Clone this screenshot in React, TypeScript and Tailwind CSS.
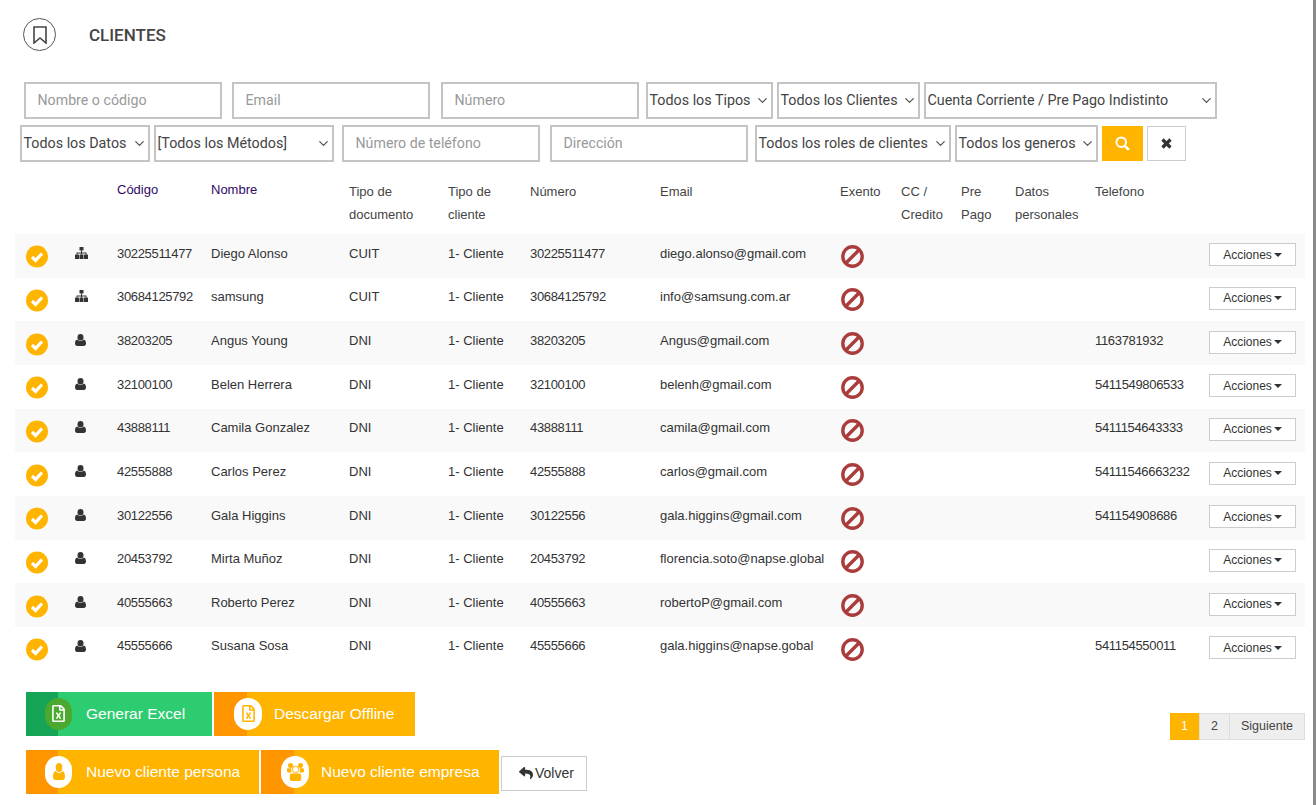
import type { ReactNode } from "react"
import { ChevronDown } from "lucide-react"
import { FaRegFileExcel, FaReply } from "react-icons/fa"

const clientes = [
  { tipo: "empresa", codigo: "30225511477", nombre: "Diego Alonso", doc: "CUIT", email: "diego.alonso@gmail.com", tel: "" },
  { tipo: "empresa", codigo: "30684125792", nombre: "samsung", doc: "CUIT", email: "info@samsung.com.ar", tel: "" },
  { tipo: "persona", codigo: "38203205", nombre: "Angus Young", doc: "DNI", email: "Angus@gmail.com", tel: "1163781932" },
  { tipo: "persona", codigo: "32100100", nombre: "Belen Herrera", doc: "DNI", email: "belenh@gmail.com", tel: "5411549806533" },
  { tipo: "persona", codigo: "43888111", nombre: "Camila Gonzalez", doc: "DNI", email: "camila@gmail.com", tel: "5411154643333" },
  { tipo: "persona", codigo: "42555888", nombre: "Carlos Perez", doc: "DNI", email: "carlos@gmail.com", tel: "54111546663232" },
  { tipo: "persona", codigo: "30122556", nombre: "Gala Higgins", doc: "DNI", email: "gala.higgins@gmail.com", tel: "541154908686" },
  { tipo: "persona", codigo: "20453792", nombre: "Mirta Muñoz", doc: "DNI", email: "florencia.soto@napse.global", tel: "" },
  { tipo: "persona", codigo: "40555663", nombre: "Roberto Perez", doc: "DNI", email: "robertoP@gmail.com", tel: "" },
  { tipo: "persona", codigo: "45555666", nombre: "Susana Sosa", doc: "DNI", email: "gala.higgins@napse.gobal", tel: "541154550011" },
]

function CheckIcon() {
  return (
    <svg width="22" height="23" viewBox="0 0 22 22" className="mt-[2px]">
      <circle cx="11" cy="11" r="11" fill="#ffb400" />
      <path d="M6 11.5l3.6 3.4L16 8" fill="none" stroke="#fff" strokeWidth="3.2" />
    </svg>
  )
}

function BanIcon() {
  return (
    <svg width="23" height="23" viewBox="0 0 23 23" fill="none" stroke="#ab3c3c" strokeWidth="3.4" className="mt-[1px]">
      <circle cx="11.5" cy="11.5" r="9.7" />
      <path d="M5 18L18 5" />
    </svg>
  )
}

function SitemapIcon() {
  return (
    <svg width="13" height="12" viewBox="0 0 13 12" fill="#333" className="mb-[6px] block">
      <rect x="4.5" y="0" width="4" height="3.6" rx="0.5" />
      <path d="M6 3.5h1v2h4.5v2h-1v-1H7v1H6v-1H2.5v1h-1v-2H6z" />
      <rect x="0" y="7.6" width="4" height="4.4" rx="0.5" />
      <rect x="4.5" y="7.6" width="4" height="4.4" rx="0.5" />
      <rect x="9" y="7.6" width="4" height="4.4" rx="0.5" />
    </svg>
  )
}

function UserIcon({ width, height, color }: { width: number; height: number; color: string }) {
  return (
    <svg width={width} height={height} viewBox="0 0 11 12" fill={color} preserveAspectRatio="none" className="block">
      <ellipse cx="5.5" cy="3.2" rx="3" ry="3.2" />
      <path d="M2.2 5.6c.8.9 2 1.4 3.3 1.4s2.5-.5 3.3-1.4C10.2 6 11 7.4 11 9.6c0 1.500-.9 2.400-2.200 2.400H2.200C.9 12 0 11.100 0 9.600 0 7.400.8 6 2.200 5.600z" />
    </svg>
  )
}

function UsersIcon() {
  return (
    <svg width="17" height="19" viewBox="0 0 17 19" fill="#ffb400" className="block">
      <circle cx="3.5" cy="3.500" r="2.500" />
      <circle cx="13.500" cy="3.500" r="2.500" />
      <path d="M0 7.500c0-.8.6-1.200 1.400-1.200h3C3.900 7.500 4 9 4.600 10.500H1.200C.5 10.500 0 10 0 9.300zM17 7.500c0-.8-.6-1.200-1.400-1.200h-3c.5 1.200.4 2.700-.2 4.200h3.400c.7 0 1.200-.5 1.200-1.200z" />
      <circle cx="8.500" cy="7.500" r="3.200" fill="none" stroke="#ffb400" strokeWidth="1" />
      <path d="M4.800 11.500h7.400c1.300 0 2 .9 2 2.200V17c0 1.200-.8 2-2 2H4.800c-1.200 0-2-.8-2-2v-3.300c0-1.300.7-2.200 2-2.200z" />
    </svg>
  )
}

function TextFilter({ placeholder, className }: { placeholder: string; className: string }) {
  return (
    <input
      placeholder={placeholder}
      className={`h-[37px] border-2 border-[#c4c4c4] bg-white pb-[2px] pl-[11.5px] text-[14.2px] text-[#444] outline-none placeholder:text-[#999] ${className}`}
    />
  )
}

function SelectFilter({ label, className }: { label: string; className: string }) {
  return (
    <div className={`flex h-[37px] items-center justify-between border-2 border-[#c4c4c4] bg-white pl-[1.5px] pr-[1px] text-[14.3px] text-[#444] ${className}`}>
      <span className="whitespace-nowrap">{label}</span>
      <ChevronDown size={15} strokeWidth={2} className="shrink-0 text-[#555]" />
    </div>
  )
}

function ActionButton({
  label,
  icon,
  green,
  second,
  className,
}: {
  label: string
  icon: ReactNode
  green?: boolean
  second?: boolean
  className: string
}) {
  return (
    <button className={`relative flex h-[44px] items-center font-['Liberation_Sans',Arial,sans-serif] text-[15.5px] text-white ${green ? "bg-[#2ecc71]" : "bg-[#ffb400]"} ${className}`}>
      <span className={`h-full shrink-0 ${second ? "w-[33px]" : "w-[32px]"} ${green ? "bg-[#16a556]" : "bg-[#ff9600]"}`} />
      <span className={`absolute top-[6px] flex h-[32px] items-center justify-center rounded-full ${second ? "left-[20px] w-[28px]" : "left-[19px] w-[27px]"} ${green ? "bg-[#4aa92e] text-white" : "bg-white text-[#ffb400]"}`}>
        {icon}
      </span>
      <span className={`whitespace-nowrap ${second ? "ml-[27px]" : "ml-[28px]"}`}>{label}</span>
    </button>
  )
}

function Th({ children, link }: { children?: ReactNode; link?: boolean }) {
  if (link) {
    return <th className="px-[8px] pt-[9px] align-top font-normal leading-[22px] text-[#2f0a66]">{children}</th>
  }
  return <th className="px-[8px] pt-[10px] align-top font-normal leading-[23px] text-[#444]">{children}</th>
}

export default function App() {
  return (
    <div className="relative h-[805px] w-[1316px] overflow-hidden border-r-[3px] border-[#8a8a8a] bg-white font-['Roboto',sans-serif] text-[#333]">
      <div className="flex items-center pl-[23px] pt-[18px]">
        <div className="flex h-[33px] w-[33px] items-center justify-center rounded-full border border-[#555]">
          <svg width="14" height="18" viewBox="0 0 14 18" fill="none" stroke="#444" strokeWidth="1.6">
            <path d="M1 1h12v16l-6-5-6 5z" />
          </svg>
        </div>
        <h1 className="ml-[33px] pt-[2px] text-[17px] font-medium text-[#444]">CLIENTES</h1>
      </div>

      <div className="mt-[31px] flex pl-[24px]">
        <TextFilter placeholder="Nombre o código" className="w-[198px]" />
        <TextFilter placeholder="Email" className="ml-[10px] w-[198px]" />
        <TextFilter placeholder="Número" className="ml-[11px] w-[198px]" />
        <SelectFilter label="Todos los Tipos" className="ml-[7px] w-[127px]" />
        <SelectFilter label="Todos los Clientes" className="ml-[4px] w-[143px]" />
        <SelectFilter label="Cuenta Corriente / Pre Pago Indistinto" className="ml-[4px] w-[293px]" />
      </div>

      <div className="mt-[6px] flex items-center pl-[20px]">
        <SelectFilter label="Todos los Datos" className="w-[130px]" />
        <SelectFilter label="[Todos los Métodos]" className="ml-[4px] w-[180px]" />
        <TextFilter placeholder="Número de teléfono" className="ml-[8px] w-[198px]" />
        <TextFilter placeholder="Dirección" className="ml-[10px] w-[198px]" />
        <SelectFilter label="Todos los roles de clientes" className="ml-[7px] w-[196px]" />
        <SelectFilter label="Todos los generos" className="ml-[4px] w-[143px]" />
        <button className="ml-[4px] flex h-[35px] w-[41px] items-center justify-center bg-[#ffb400]">
          <svg width="15" height="15" viewBox="0 0 15 15" fill="none" stroke="#fff">
            <circle cx="6.200" cy="6.200" r="4.800" strokeWidth="2" />
            <path d="M9.800 9.800l4 4" strokeWidth="2.600" />
          </svg>
        </button>
        <button className="ml-[4px] flex h-[35px] w-[39px] items-center justify-center border border-[#ccc] bg-white">
          <svg width="11" height="11" viewBox="0 0 11 11" fill="none" stroke="#333" strokeWidth="3.200">
            <path d="M1.500 1.500l8 8M9.500 1.500l-8 8" />
          </svg>
        </button>
      </div>

      <table className="ml-[15px] mt-[8px] w-[1290px] table-fixed border-collapse text-left font-['Liberation_Sans',Arial,sans-serif] text-[13px]">
        <colgroup>
          <col className="w-[52px]" />
          <col className="w-[42px]" />
          <col className="w-[94px]" />
          <col className="w-[138px]" />
          <col className="w-[99px]" />
          <col className="w-[82px]" />
          <col className="w-[130px]" />
          <col className="w-[180px]" />
          <col className="w-[61px]" />
          <col className="w-[60px]" />
          <col className="w-[54px]" />
          <col className="w-[80px]" />
          <col className="w-[114px]" />
          <col className="w-[104px]" />
        </colgroup>
        <thead>
          <tr className="h-[64px]">
            <Th />
            <Th />
            <Th link>Código</Th>
            <Th link>Nombre</Th>
            <Th>Tipo de<br />documento</Th>
            <Th>Tipo de<br />cliente</Th>
            <Th>Número</Th>
            <Th>Email</Th>
            <Th>Exento</Th>
            <Th>CC /<br />Credito</Th>
            <Th>Pre<br />Pago</Th>
            <Th>Datos<br />personales</Th>
            <Th>Telefono</Th>
            <Th />
          </tr>
        </thead>
        <tbody>
          {clientes.map((c, i) => (
            <tr key={c.codigo} className={`h-[43.67px] ${i % 2 === 0 ? "bg-[#f9f9f9]" : "bg-white"}`}>
              <td className="pl-[11px] align-middle">
                <CheckIcon />
              </td>
              <td className="pl-[8px] align-middle">
                {c.tipo === "empresa" ? <SitemapIcon /> : <div className="mb-[6px]"><UserIcon width={11} height={12} color="#333" /></div>}
              </td>
              <td className="px-[8px] pb-[5px] align-middle tracking-[-0.33px]">{c.codigo}</td>
              <td className="px-[8px] pb-[5px] align-middle whitespace-nowrap">{c.nombre}</td>
              <td className="px-[8px] pb-[5px] align-middle">{c.doc}</td>
              <td className="px-[8px] pb-[5px] align-middle whitespace-nowrap">1- Cliente</td>
              <td className="px-[8px] pb-[5px] align-middle tracking-[-0.33px]">{c.codigo}</td>
              <td className="px-[8px] pb-[5px] align-middle whitespace-nowrap">{c.email}</td>
              <td className="pl-[9px] align-middle">
                <BanIcon />
              </td>
              <td />
              <td />
              <td />
              <td className="px-[8px] pb-[5px] align-middle whitespace-nowrap tracking-[-0.33px]">{c.tel}</td>
              <td className="pl-[8px] pb-[2px] align-middle">
                <button className="flex h-[23px] w-[87px] items-center justify-center gap-[2px] border border-[#ccc] bg-white text-[12px] text-[#333]">
                  Acciones
                  <span className="h-0 w-0 border-x-4 border-t-4 border-x-transparent border-t-[#333]" />
                </button>
              </td>
            </tr>
          ))}
        </tbody>
      </table>

      <div className="mt-[21px] flex items-start justify-between pl-[26px] pr-[8px]">
        <div>
          <div className="flex gap-[2px]">
            <ActionButton green label="Generar Excel" icon={<FaRegFileExcel size={17} />} className="w-[186px]" />
            <ActionButton second label="Descargar Offline" icon={<FaRegFileExcel size={17} />} className="w-[201px]" />
          </div>
          <div className="mt-[14px] flex items-start gap-[2px]">
            <ActionButton label="Nuevo cliente persona" icon={<UserIcon width={12} height={17} color="#ffb400" />} className="w-[233px]" />
            <ActionButton second label="Nuevo cliente empresa" icon={<UsersIcon />} className="w-[238px]" />
            <button className="mt-[6px] flex h-[35px] w-[86px] items-center gap-[2px] border border-[#ccc] bg-white pl-[17px] font-['Liberation_Sans',Arial,sans-serif] text-[14px] text-[#333]">
              <FaReply size={14} /> Volver
            </button>
          </div>
        </div>
        <div className="mt-[21px] flex h-[27px] font-['Liberation_Sans',Arial,sans-serif] text-[12.5px]">
          <span className="flex w-[29px] items-center justify-center bg-[#ffb400] text-white">1</span>
          <span className="flex w-[31px] items-center justify-center border border-[#ddd] bg-[#eee] text-[#444]">2</span>
          <span className="flex w-[75px] items-center justify-center border border-[#ddd] border-l-0 bg-[#eee] text-[#444]">Siguiente</span>
        </div>
      </div>
    </div>
  )
}
